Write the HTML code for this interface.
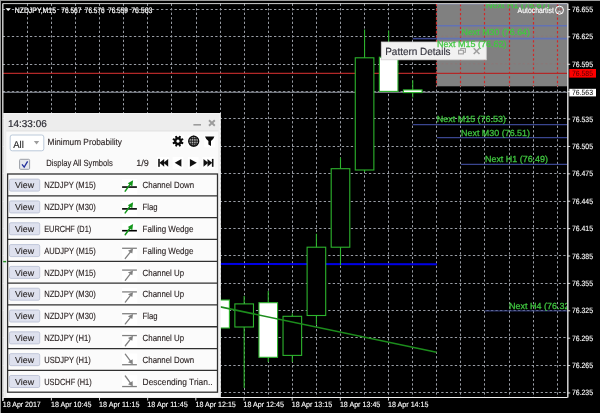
<!DOCTYPE html>
<html><head><meta charset="utf-8"><title>NZDJPY,M15</title>
<style>
html,body{margin:0;padding:0;background:#000;}
body{width:600px;height:413px;overflow:hidden;}
svg{display:block;will-change:transform;}
.st{position:absolute;left:0;top:0;background:#9c9c9c;z-index:2;}
</style></head><body>
<div class="st" style="width:600px;height:1.1px"></div><div class="st" style="width:1px;height:413px"></div>
<svg width="600" height="413" viewBox="0 0 600 413" font-family="'Liberation Sans', sans-serif" text-rendering="geometricPrecision">
<rect x="0" y="0" width="600" height="413" fill="#000"/>
<g stroke="#989ca4" stroke-width="1" stroke-dasharray="2.3 2.22" fill="none">
<line x1="27.50" y1="3.60" x2="27.50" y2="397.50"/>
<line x1="51.50" y1="3.60" x2="51.50" y2="397.50"/>
<line x1="75.50" y1="3.60" x2="75.50" y2="397.50"/>
<line x1="99.50" y1="3.60" x2="99.50" y2="397.50"/>
<line x1="123.50" y1="3.60" x2="123.50" y2="397.50"/>
<line x1="147.50" y1="3.60" x2="147.50" y2="397.50"/>
<line x1="171.50" y1="3.60" x2="171.50" y2="397.50"/>
<line x1="196.50" y1="3.60" x2="196.50" y2="397.50"/>
<line x1="220.50" y1="3.60" x2="220.50" y2="397.50"/>
<line x1="244.50" y1="3.60" x2="244.50" y2="397.50"/>
<line x1="268.50" y1="3.60" x2="268.50" y2="397.50"/>
<line x1="292.50" y1="3.60" x2="292.50" y2="397.50"/>
<line x1="316.50" y1="3.60" x2="316.50" y2="397.50"/>
<line x1="340.50" y1="3.60" x2="340.50" y2="397.50"/>
<line x1="364.50" y1="3.60" x2="364.50" y2="397.50"/>
<line x1="388.50" y1="3.60" x2="388.50" y2="397.50"/>
<line x1="412.50" y1="3.60" x2="412.50" y2="397.50"/>
<line x1="436.50" y1="3.60" x2="436.50" y2="397.50"/>
<line x1="460.50" y1="3.60" x2="460.50" y2="397.50"/>
<line x1="484.50" y1="3.60" x2="484.50" y2="397.50"/>
<line x1="509.50" y1="3.60" x2="509.50" y2="397.50"/>
<line x1="533.50" y1="3.60" x2="533.50" y2="397.50"/>
<line x1="557.50" y1="3.60" x2="557.50" y2="397.50"/>
<line x1="2.80" y1="9.50" x2="567.60" y2="9.50"/>
<line x1="2.80" y1="36.50" x2="567.60" y2="36.50"/>
<line x1="2.80" y1="64.50" x2="567.60" y2="64.50"/>
<line x1="2.80" y1="91.50" x2="567.60" y2="91.50"/>
<line x1="2.80" y1="118.50" x2="567.60" y2="118.50"/>
<line x1="2.80" y1="146.50" x2="567.60" y2="146.50"/>
<line x1="2.80" y1="173.50" x2="567.60" y2="173.50"/>
<line x1="2.80" y1="201.50" x2="567.60" y2="201.50"/>
<line x1="2.80" y1="228.50" x2="567.60" y2="228.50"/>
<line x1="2.80" y1="255.50" x2="567.60" y2="255.50"/>
<line x1="2.80" y1="283.50" x2="567.60" y2="283.50"/>
<line x1="2.80" y1="310.50" x2="567.60" y2="310.50"/>
<line x1="2.80" y1="337.50" x2="567.60" y2="337.50"/>
<line x1="2.80" y1="365.50" x2="567.60" y2="365.50"/>
<line x1="2.80" y1="392.50" x2="567.60" y2="392.50"/>
</g>
<rect x="436.8" y="4" width="130.80" height="82.3" fill="#808080"/>
<g stroke="#d02828" stroke-width="1.2" stroke-dasharray="2.3 2.22">
<line x1="436.50" y1="4" x2="436.50" y2="86.3"/>
<line x1="460.50" y1="4" x2="460.50" y2="86.3"/>
<line x1="484.50" y1="4" x2="484.50" y2="86.3"/>
<line x1="509.50" y1="4" x2="509.50" y2="86.3"/>
<line x1="533.50" y1="4" x2="533.50" y2="86.3"/>
<line x1="557.50" y1="4" x2="557.50" y2="86.3"/>
</g>
<g stroke="#927474" stroke-width="0.7" stroke-dasharray="2.3 2.22">
<line x1="436.8" y1="36.40" x2="567.60" y2="36.40"/>
<line x1="436.8" y1="63.80" x2="567.60" y2="63.80"/>
</g>
<line x1="2.80" y1="73.3" x2="567.60" y2="73.3" stroke="#b22828" stroke-width="1.35"/>
<line x1="2.80" y1="92.4" x2="567.60" y2="92.4" stroke="#70747c" stroke-width="1.3"/>
<line x1="437" y1="4.4" x2="567.60" y2="4.4" stroke="#7880a4" stroke-width="0.6"/>
<line x1="437.00" y1="25.80" x2="567.60" y2="25.80" stroke="#6272b4" stroke-width="1.60"/>
<line x1="412.80" y1="38.60" x2="436.80" y2="38.60" stroke="#3a4690" stroke-width="1.60"/>
<line x1="436.80" y1="38.60" x2="567.60" y2="38.60" stroke="#6272b4" stroke-width="1.60"/>
<line x1="412.80" y1="124.60" x2="567.60" y2="124.60" stroke="#3a4690" stroke-width="1.30"/>
<line x1="436.80" y1="137.70" x2="567.60" y2="137.70" stroke="#3a4690" stroke-width="1.30"/>
<line x1="461.00" y1="164.30" x2="567.60" y2="164.30" stroke="#3a4690" stroke-width="1.30"/>
<line x1="484.80" y1="310.90" x2="567.60" y2="310.90" stroke="#3a4690" stroke-width="1.00"/>
<line x1="2.80" y1="263.6" x2="436.8" y2="264.3" stroke="#0000e6" stroke-width="2"/>
<line x1="220.09" y1="296.00" x2="220.09" y2="340.00" stroke="#2db42d" stroke-width="1.1"/>
<rect x="210.79" y="300.00" width="18.60" height="28.00" fill="#fff" stroke="#2db42d" stroke-width="1.1"/>
<line x1="244.17" y1="296.00" x2="244.17" y2="388.00" stroke="#2db42d" stroke-width="1.1"/>
<rect x="234.87" y="303.90" width="18.60" height="23.10" fill="#000" stroke="#2db42d" stroke-width="1.1"/>
<line x1="268.25" y1="291.00" x2="268.25" y2="362.00" stroke="#2db42d" stroke-width="1.1"/>
<rect x="258.95" y="302.70" width="18.60" height="54.60" fill="#fff" stroke="#2db42d" stroke-width="1.1"/>
<line x1="292.33" y1="313.50" x2="292.33" y2="362.00" stroke="#2db42d" stroke-width="1.1"/>
<rect x="283.03" y="316.30" width="18.60" height="39.10" fill="#000" stroke="#2db42d" stroke-width="1.1"/>
<line x1="316.41" y1="233.70" x2="316.41" y2="324.40" stroke="#2db42d" stroke-width="1.1"/>
<rect x="307.11" y="247.20" width="18.60" height="68.30" fill="#000" stroke="#2db42d" stroke-width="1.1"/>
<line x1="340.49" y1="157.60" x2="340.49" y2="265.00" stroke="#2db42d" stroke-width="1.1"/>
<rect x="331.19" y="168.70" width="18.60" height="78.50" fill="#000" stroke="#2db42d" stroke-width="1.1"/>
<line x1="364.57" y1="29.60" x2="364.57" y2="172.00" stroke="#2db42d" stroke-width="1.1"/>
<rect x="355.27" y="57.80" width="18.60" height="112.20" fill="#000" stroke="#2db42d" stroke-width="1.1"/>
<line x1="388.65" y1="30.50" x2="388.65" y2="91.40" stroke="#2db42d" stroke-width="1.1"/>
<rect x="379.35" y="57.20" width="18.60" height="34.20" fill="#fff" stroke="#2db42d" stroke-width="1.1"/>
<line x1="412.73" y1="80.30" x2="412.73" y2="97.40" stroke="#2db42d" stroke-width="1.1"/>
<rect x="403.43" y="89.90" width="18.60" height="2.70" fill="#fff" stroke="#2db42d" stroke-width="1.1"/>
<line x1="180" y1="298.4" x2="436.5" y2="352.3" stroke="#1c8c1c" stroke-width="1.6"/>
<clipPath id="cc"><rect x="2.80" y="3.60" width="564.30" height="393.90"/></clipPath>
<g clip-path="url(#cc)">
<text x="486.00" y="8.30" font-size="8.8" fill="#40c840" stroke="#40c840" stroke-width="0.25" textLength="63.50" lengthAdjust="spacingAndGlyphs">Next H1 (76.67)</text>
<text x="461.50" y="34.60" font-size="8.8" fill="#40c840" stroke="#40c840" stroke-width="0.25" textLength="68.50" lengthAdjust="spacingAndGlyphs">Next M30 (76.64)</text>
<text x="436.80" y="122.40" font-size="8.8" fill="#40c840" stroke="#40c840" stroke-width="0.25" textLength="69.20" lengthAdjust="spacingAndGlyphs">Next M15 (76.53)</text>
<text x="461.00" y="135.70" font-size="8.8" fill="#40c840" stroke="#40c840" stroke-width="0.25" textLength="69.00" lengthAdjust="spacingAndGlyphs">Next M30 (76.51)</text>
<text x="485.00" y="162.10" font-size="8.8" fill="#40c840" stroke="#40c840" stroke-width="0.25" textLength="63.00" lengthAdjust="spacingAndGlyphs">Next H1 (76.49)</text>
<text x="509.00" y="309.10" font-size="8.8" fill="#40c840" stroke="#40c840" stroke-width="0.25" textLength="63.50" lengthAdjust="spacingAndGlyphs">Next H4 (76.32)</text>
</g>
<line x1="2.80" y1="3.60" x2="567.60" y2="3.60" stroke="#e8e8e8" stroke-width="0.9"/>
<line x1="2.80" y1="3.60" x2="2.80" y2="401.00" stroke="#e4e4e4" stroke-width="1.3"/>
<line x1="567.80" y1="3.60" x2="567.80" y2="397.50" stroke="#d4d4d4" stroke-width="1.5"/>
<line x1="2.80" y1="397.50" x2="567.60" y2="397.50" stroke="#f0f0f0" stroke-width="1"/>
<line x1="567.60" y1="9.50" x2="570.20" y2="9.50" stroke="#f0f0f0" stroke-width="0.9"/>
<text x="572" y="12.00" font-size="7.7" fill="#fff" stroke="#fff" stroke-width="0.12" textLength="21" lengthAdjust="spacingAndGlyphs">76.655</text>
<line x1="567.60" y1="36.89" x2="570.20" y2="36.89" stroke="#f0f0f0" stroke-width="0.9"/>
<text x="572" y="39.39" font-size="7.7" fill="#fff" stroke="#fff" stroke-width="0.12" textLength="21" lengthAdjust="spacingAndGlyphs">76.625</text>
<line x1="567.60" y1="64.28" x2="570.20" y2="64.28" stroke="#f0f0f0" stroke-width="0.9"/>
<text x="572" y="66.78" font-size="7.7" fill="#fff" stroke="#fff" stroke-width="0.12" textLength="21" lengthAdjust="spacingAndGlyphs">76.595</text>
<line x1="567.60" y1="91.67" x2="570.20" y2="91.67" stroke="#f0f0f0" stroke-width="0.9"/>
<line x1="567.60" y1="119.06" x2="570.20" y2="119.06" stroke="#f0f0f0" stroke-width="0.9"/>
<text x="572" y="121.56" font-size="7.7" fill="#fff" stroke="#fff" stroke-width="0.12" textLength="21" lengthAdjust="spacingAndGlyphs">76.535</text>
<line x1="567.60" y1="146.45" x2="570.20" y2="146.45" stroke="#f0f0f0" stroke-width="0.9"/>
<text x="572" y="148.95" font-size="7.7" fill="#fff" stroke="#fff" stroke-width="0.12" textLength="21" lengthAdjust="spacingAndGlyphs">76.505</text>
<line x1="567.60" y1="173.84" x2="570.20" y2="173.84" stroke="#f0f0f0" stroke-width="0.9"/>
<text x="572" y="176.34" font-size="7.7" fill="#fff" stroke="#fff" stroke-width="0.12" textLength="21" lengthAdjust="spacingAndGlyphs">76.475</text>
<line x1="567.60" y1="201.23" x2="570.20" y2="201.23" stroke="#f0f0f0" stroke-width="0.9"/>
<text x="572" y="203.73" font-size="7.7" fill="#fff" stroke="#fff" stroke-width="0.12" textLength="21" lengthAdjust="spacingAndGlyphs">76.445</text>
<line x1="567.60" y1="228.62" x2="570.20" y2="228.62" stroke="#f0f0f0" stroke-width="0.9"/>
<text x="572" y="231.12" font-size="7.7" fill="#fff" stroke="#fff" stroke-width="0.12" textLength="21" lengthAdjust="spacingAndGlyphs">76.415</text>
<line x1="567.60" y1="256.01" x2="570.20" y2="256.01" stroke="#f0f0f0" stroke-width="0.9"/>
<text x="572" y="258.51" font-size="7.7" fill="#fff" stroke="#fff" stroke-width="0.12" textLength="21" lengthAdjust="spacingAndGlyphs">76.385</text>
<line x1="567.60" y1="283.40" x2="570.20" y2="283.40" stroke="#f0f0f0" stroke-width="0.9"/>
<text x="572" y="285.90" font-size="7.7" fill="#fff" stroke="#fff" stroke-width="0.12" textLength="21" lengthAdjust="spacingAndGlyphs">76.355</text>
<line x1="567.60" y1="310.79" x2="570.20" y2="310.79" stroke="#f0f0f0" stroke-width="0.9"/>
<text x="572" y="313.29" font-size="7.7" fill="#fff" stroke="#fff" stroke-width="0.12" textLength="21" lengthAdjust="spacingAndGlyphs">76.325</text>
<line x1="567.60" y1="338.18" x2="570.20" y2="338.18" stroke="#f0f0f0" stroke-width="0.9"/>
<text x="572" y="340.68" font-size="7.7" fill="#fff" stroke="#fff" stroke-width="0.12" textLength="21" lengthAdjust="spacingAndGlyphs">76.295</text>
<line x1="567.60" y1="365.57" x2="570.20" y2="365.57" stroke="#f0f0f0" stroke-width="0.9"/>
<text x="572" y="368.07" font-size="7.7" fill="#fff" stroke="#fff" stroke-width="0.12" textLength="21" lengthAdjust="spacingAndGlyphs">76.265</text>
<line x1="567.60" y1="392.96" x2="570.20" y2="392.96" stroke="#f0f0f0" stroke-width="0.9"/>
<text x="572" y="395.46" font-size="7.7" fill="#fff" stroke="#fff" stroke-width="0.12" textLength="21" lengthAdjust="spacingAndGlyphs">76.235</text>
<rect x="569.3" y="69" width="26.7" height="8.6" fill="#ff0000"/>
<text x="572" y="76.2" font-size="7.6" fill="#500000" textLength="21" lengthAdjust="spacingAndGlyphs">76.585</text>
<rect x="569.3" y="88.8" width="26.7" height="7.6" fill="#ffffff"/>
<text x="572" y="95.4" font-size="7.6" fill="#000" textLength="21" lengthAdjust="spacingAndGlyphs">76.563</text>
<line x1="3.20" y1="397.50" x2="3.20" y2="400.50" stroke="#f0f0f0" stroke-width="0.9"/>
<text x="2.80" y="407.2" font-size="7.7" fill="#fff" stroke="#fff" stroke-width="0.12" textLength="38.0" lengthAdjust="spacingAndGlyphs">18 Apr 2017</text>
<line x1="51.36" y1="397.50" x2="51.36" y2="400.50" stroke="#f0f0f0" stroke-width="0.9"/>
<text x="50.96" y="407.2" font-size="7.7" fill="#fff" stroke="#fff" stroke-width="0.12" textLength="40.4" lengthAdjust="spacingAndGlyphs">18 Apr 10:45</text>
<line x1="99.52" y1="397.50" x2="99.52" y2="400.50" stroke="#f0f0f0" stroke-width="0.9"/>
<text x="99.12" y="407.2" font-size="7.7" fill="#fff" stroke="#fff" stroke-width="0.12" textLength="40.4" lengthAdjust="spacingAndGlyphs">18 Apr 11:15</text>
<line x1="147.68" y1="397.50" x2="147.68" y2="400.50" stroke="#f0f0f0" stroke-width="0.9"/>
<text x="147.28" y="407.2" font-size="7.7" fill="#fff" stroke="#fff" stroke-width="0.12" textLength="40.4" lengthAdjust="spacingAndGlyphs">18 Apr 11:45</text>
<line x1="195.84" y1="397.50" x2="195.84" y2="400.50" stroke="#f0f0f0" stroke-width="0.9"/>
<text x="195.44" y="407.2" font-size="7.7" fill="#fff" stroke="#fff" stroke-width="0.12" textLength="40.4" lengthAdjust="spacingAndGlyphs">18 Apr 12:15</text>
<line x1="244.00" y1="397.50" x2="244.00" y2="400.50" stroke="#f0f0f0" stroke-width="0.9"/>
<text x="243.60" y="407.2" font-size="7.7" fill="#fff" stroke="#fff" stroke-width="0.12" textLength="40.4" lengthAdjust="spacingAndGlyphs">18 Apr 12:45</text>
<line x1="292.16" y1="397.50" x2="292.16" y2="400.50" stroke="#f0f0f0" stroke-width="0.9"/>
<text x="291.76" y="407.2" font-size="7.7" fill="#fff" stroke="#fff" stroke-width="0.12" textLength="40.4" lengthAdjust="spacingAndGlyphs">18 Apr 13:15</text>
<line x1="340.32" y1="397.50" x2="340.32" y2="400.50" stroke="#f0f0f0" stroke-width="0.9"/>
<text x="339.92" y="407.2" font-size="7.7" fill="#fff" stroke="#fff" stroke-width="0.12" textLength="40.4" lengthAdjust="spacingAndGlyphs">18 Apr 13:45</text>
<line x1="388.48" y1="397.50" x2="388.48" y2="400.50" stroke="#f0f0f0" stroke-width="0.9"/>
<text x="388.08" y="407.2" font-size="7.7" fill="#fff" stroke="#fff" stroke-width="0.12" textLength="40.4" lengthAdjust="spacingAndGlyphs">18 Apr 14:15</text>
<path d="M5.5 8.3 L10.9 8.3 L8.2 11.1 Z" fill="#fff"/>
<text x="14.70" y="12.6" font-size="8" fill="#fff" stroke="#fff" stroke-width="0.2" textLength="41.30" lengthAdjust="spacingAndGlyphs">NZDJPY,M15</text>
<text x="61.30" y="12.6" font-size="8" fill="#fff" stroke="#fff" stroke-width="0.2" textLength="20.00" lengthAdjust="spacingAndGlyphs">76.567</text>
<text x="84.80" y="12.6" font-size="8" fill="#fff" stroke="#fff" stroke-width="0.2" textLength="19.80" lengthAdjust="spacingAndGlyphs">76.576</text>
<text x="108.00" y="12.6" font-size="8" fill="#fff" stroke="#fff" stroke-width="0.2" textLength="20.00" lengthAdjust="spacingAndGlyphs">76.559</text>
<text x="131.20" y="12.6" font-size="8" fill="#fff" stroke="#fff" stroke-width="0.2" textLength="21.30" lengthAdjust="spacingAndGlyphs">76.563</text>
<text x="517.6" y="13.1" font-size="8" fill="#fff" stroke="#fff" stroke-width="0.15" textLength="36.3" lengthAdjust="spacingAndGlyphs">Autochartist</text>
<circle cx="559.5" cy="10.2" r="4.0" fill="#8a8484" stroke="#fff" stroke-width="1"/>
<path d="M557.6 12.5 Q559.5 10.6 561.4 12.5" stroke="#fff" stroke-width="0.8" fill="none"/>
<circle cx="558.1" cy="9.1" r="0.7" fill="#a02020"/><circle cx="560.9" cy="9.1" r="0.7" fill="#a02020"/>
<rect x="381.3" y="42" width="105" height="17.8" fill="#f1f1f1" stroke="#d0d0d0" stroke-width="0.8"/>
<text x="385.2" y="54.6" font-size="10.4" fill="#34343e" stroke="#34343e" stroke-width="0.15" textLength="65.4" lengthAdjust="spacingAndGlyphs">Pattern Details</text>
<g stroke="#a0a0a0" stroke-width="1.1" fill="none"><rect x="458.6" y="50.3" width="4.8" height="3.6"/><path d="M460.8 50.2 V48.5 H465.4 V52.2 H463.5"/></g>
<path d="M473.7 48.3 L479.5 54 M479.5 48.3 L473.7 54" stroke="#a0a0a0" stroke-width="1.6"/>
<g clip-path="url(#cc)">
<text x="437.00" y="47.40" font-size="8.8" fill="#40c840" stroke="#40c840" stroke-width="0.25" textLength="69.50" lengthAdjust="spacingAndGlyphs">Next M15 (76.62)</text>
</g>
<rect x="3.40" y="113.00" width="217.20" height="284.00" fill="#ededed"/>
<path d="M4.00 397.00 V113.60 H220.00 V397.00" fill="none" stroke="#f4f4f4" stroke-width="1.2"/>
<rect x="6.3" y="131" width="212" height="266" fill="#fafafa"/>
<line x1="6.3" y1="131" x2="218.3" y2="131" stroke="#dcdcdc" stroke-width="0.8"/>
<text x="7.9" y="126.7" font-size="10" fill="#2c2c34" stroke="#2c2c34" stroke-width="0.2" textLength="38.9" lengthAdjust="spacingAndGlyphs">14:33:06</text>
<line x1="193.4" y1="124.8" x2="201" y2="124.8" stroke="#9c9c9c" stroke-width="1.6"/>
<path d="M209 120.2 L214.8 125.8 M214.8 120.2 L209 125.8" stroke="#9c9c9c" stroke-width="1.9"/>
<rect x="10.2" y="135" width="33.6" height="15.8" rx="2" fill="#fff" stroke="#b4c4d6" stroke-width="0.9"/>
<text x="13.2" y="147.7" font-size="9.8" fill="#2c2c2c" stroke="#2c2c2c" stroke-width="0.15" textLength="10.6" lengthAdjust="spacingAndGlyphs">All</text>
<path d="M33.9 141.1 L39.2 141.1 L36.55 144.4 Z" fill="#9c9c9c"/>
<text x="47.5" y="145" font-size="9" fill="#2c2424" stroke="#2c2424" stroke-width="0.12" textLength="74.5" lengthAdjust="spacingAndGlyphs">Minimum Probability</text>
<rect x="19.6" y="159.3" width="10" height="10" rx="1" fill="#e6e8ee" stroke="#9a9ea6" stroke-width="1"/>
<path d="M22 164.3 L24.2 167.2 L27.6 161.4" stroke="#22309c" stroke-width="1.3" fill="none"/>
<text x="46.2" y="165.9" font-size="9" fill="#2c2424" stroke="#2c2424" stroke-width="0.12" textLength="66.6" lengthAdjust="spacingAndGlyphs">Display All Symbols</text>
<text x="136.2" y="165.9" font-size="9" fill="#2c2424" stroke="#2c2424" stroke-width="0.12" textLength="12.6" lengthAdjust="spacingAndGlyphs">1/9</text>
<rect x="172.00" y="135.4" width="12.00" height="12" fill="#ffffff"/>
<rect x="187.50" y="135.4" width="12.00" height="12" fill="#ffffff"/>
<rect x="204.30" y="135.4" width="11.00" height="12" fill="#ffffff"/>
<path d="M183.53 142.57 L182.88 144.14 L181.00 143.69 L180.49 144.20 L180.94 146.08 L179.37 146.73 L178.36 145.08 L177.64 145.08 L176.63 146.73 L175.06 146.08 L175.51 144.20 L175.00 143.69 L173.12 144.14 L172.47 142.57 L174.12 141.56 L174.12 140.84 L172.47 139.83 L173.12 138.26 L175.00 138.71 L175.51 138.20 L175.06 136.32 L176.63 135.67 L177.64 137.32 L178.36 137.32 L179.37 135.67 L180.94 136.32 L180.49 138.20 L181.00 138.71 L182.88 138.26 L183.53 139.83 L181.88 140.84 L181.88 141.56 Z M178.00 139.60 a1.6 1.6 0 1 0 0.01 0 Z" fill="#0a0a0a" fill-rule="evenodd"/>
<g stroke="#0a0a0a" fill="none"><circle cx="193.70" cy="141.20" r="5.0" stroke-width="1.3" fill="#b4b4b4"/>
<ellipse cx="193.70" cy="141.20" rx="2.5" ry="5.0" stroke-width="0.8"/>
<path d="M188.70 141.20 H198.70 M189.30 138.60 H198.10 M189.30 143.80 H198.10 M193.70 136.20 V146.20" stroke-width="0.8"/></g>
<path d="M205.00 136.60 H214.40 Q213.90 138.70 211.00 141.10 V145.90 L208.40 144.50 V141.10 Q205.50 138.70 205.00 136.60 Z" fill="#0a0a0a"/>
<rect x="157.00" y="157" width="12.20" height="11.8" fill="#ffffff"/>
<rect x="172.60" y="157" width="10.60" height="11.8" fill="#ffffff"/>
<rect x="188.00" y="157" width="10.60" height="11.8" fill="#ffffff"/>
<rect x="202.40" y="157" width="12.20" height="11.8" fill="#ffffff"/>
<rect x="158.2" y="158.90" width="1.6" height="7.90" fill="#111"/>
<path d="M164.20 158.90 L159.40 162.85 L164.20 166.80 Z" fill="#111"/>
<path d="M168.20 158.90 L163.40 162.85 L168.20 166.80 Z" fill="#111"/>
<path d="M181.40 158.90 L174.70 162.85 L181.40 166.80 Z" fill="#111"/>
<path d="M189.90 158.90 L196.80 162.85 L189.90 166.80 Z" fill="#111"/>
<path d="M203.50 158.90 L208.30 162.85 L203.50 166.80 Z" fill="#111"/>
<path d="M207.50 158.90 L212.30 162.85 L207.50 166.80 Z" fill="#111"/>
<rect x="211.9" y="158.90" width="1.6" height="7.90" fill="#111"/>
<rect x="7.60" y="174.00" width="209.90" height="218.20" fill="#fbfbfb" stroke="#303030" stroke-width="1.3"/>
<rect x="9.4" y="179.11" width="30.3" height="12" rx="1.5" fill="#dee1ee" stroke="#bcc3d6" stroke-width="0.9"/>
<text x="15.1" y="188.31" font-size="8.7" fill="#2c2828" stroke="#2c2828" stroke-width="0.12" textLength="19" lengthAdjust="spacingAndGlyphs">View</text>
<text x="44.2" y="188.31" font-size="9" fill="#2c2424" stroke="#2c2424" stroke-width="0.12" textLength="51.5" lengthAdjust="spacingAndGlyphs">NZDJPY (M15)</text>
<text x="142.6" y="188.31" font-size="9" fill="#2c2424" stroke="#2c2424" stroke-width="0.12" textLength="51.5" lengthAdjust="spacingAndGlyphs">Channel Down</text>
<rect x="121.9" y="179.01" width="15.4" height="15.2" fill="#ffffff"/>
<line x1="122.1" y1="187.06" x2="136.9" y2="187.06" stroke="#000" stroke-width="1.6"/>
<line x1="125.2" y1="191.11" x2="130.4" y2="183.91" stroke="#12961a" stroke-width="1.5" stroke-linecap="round"/>
<path d="M133.1 180.31 L127.8 183.31 L132.3 186.51 Z" fill="#12961a"/>
<line x1="7.60" y1="195.82" x2="217.50" y2="195.82" stroke="#303030" stroke-width="1.3"/>
<rect x="9.4" y="200.93" width="30.3" height="12" rx="1.5" fill="#dee1ee" stroke="#bcc3d6" stroke-width="0.9"/>
<text x="15.1" y="210.13" font-size="8.7" fill="#2c2828" stroke="#2c2828" stroke-width="0.12" textLength="19" lengthAdjust="spacingAndGlyphs">View</text>
<text x="44.2" y="210.13" font-size="9" fill="#2c2424" stroke="#2c2424" stroke-width="0.12" textLength="51.5" lengthAdjust="spacingAndGlyphs">NZDJPY (M30)</text>
<text x="142.6" y="210.13" font-size="9" fill="#2c2424" stroke="#2c2424" stroke-width="0.12" textLength="15.0" lengthAdjust="spacingAndGlyphs">Flag</text>
<rect x="121.9" y="200.83" width="15.4" height="15.2" fill="#ffffff"/>
<line x1="122.1" y1="208.88" x2="136.9" y2="208.88" stroke="#000" stroke-width="1.6"/>
<line x1="125.2" y1="212.93" x2="130.4" y2="205.73" stroke="#12961a" stroke-width="1.5" stroke-linecap="round"/>
<path d="M133.1 202.13 L127.8 205.13 L132.3 208.33 Z" fill="#12961a"/>
<line x1="7.60" y1="217.64" x2="217.50" y2="217.64" stroke="#303030" stroke-width="1.3"/>
<rect x="9.4" y="222.75" width="30.3" height="12" rx="1.5" fill="#dee1ee" stroke="#bcc3d6" stroke-width="0.9"/>
<text x="15.1" y="231.95" font-size="8.7" fill="#2c2828" stroke="#2c2828" stroke-width="0.12" textLength="19" lengthAdjust="spacingAndGlyphs">View</text>
<text x="44.2" y="231.95" font-size="9" fill="#2c2424" stroke="#2c2424" stroke-width="0.12" textLength="47.0" lengthAdjust="spacingAndGlyphs">EURCHF (D1)</text>
<text x="142.6" y="231.95" font-size="9" fill="#2c2424" stroke="#2c2424" stroke-width="0.12" textLength="50.8" lengthAdjust="spacingAndGlyphs">Falling Wedge</text>
<rect x="121.9" y="222.65" width="15.4" height="15.2" fill="#ffffff"/>
<line x1="122.1" y1="230.70" x2="136.9" y2="230.70" stroke="#000" stroke-width="1.6"/>
<line x1="125.2" y1="234.75" x2="130.4" y2="227.55" stroke="#12961a" stroke-width="1.5" stroke-linecap="round"/>
<path d="M133.1 223.95 L127.8 226.95 L132.3 230.15 Z" fill="#12961a"/>
<line x1="7.60" y1="239.46" x2="217.50" y2="239.46" stroke="#303030" stroke-width="1.3"/>
<rect x="9.4" y="244.57" width="30.3" height="12" rx="1.5" fill="#dee1ee" stroke="#bcc3d6" stroke-width="0.9"/>
<text x="15.1" y="253.77" font-size="8.7" fill="#2c2828" stroke="#2c2828" stroke-width="0.12" textLength="19" lengthAdjust="spacingAndGlyphs">View</text>
<text x="44.2" y="253.77" font-size="9" fill="#2c2424" stroke="#2c2424" stroke-width="0.12" textLength="51.5" lengthAdjust="spacingAndGlyphs">AUDJPY (M15)</text>
<text x="142.6" y="253.77" font-size="9" fill="#2c2424" stroke="#2c2424" stroke-width="0.12" textLength="50.8" lengthAdjust="spacingAndGlyphs">Falling Wedge</text>
<rect x="121.9" y="244.47" width="15.4" height="15.2" fill="#ffffff"/>
<line x1="122.1" y1="248.27" x2="136.9" y2="248.27" stroke="#808080" stroke-width="1.3"/>
<line x1="125.3" y1="258.47" x2="130.3" y2="252.07" stroke="#808080" stroke-width="1.3" stroke-linecap="round"/>
<path d="M133.0 248.57 L127.9 250.67 L132.3 253.47 Z" fill="#808080"/>
<line x1="7.60" y1="261.28" x2="217.50" y2="261.28" stroke="#303030" stroke-width="1.3"/>
<rect x="9.4" y="266.39" width="30.3" height="12" rx="1.5" fill="#dee1ee" stroke="#bcc3d6" stroke-width="0.9"/>
<text x="15.1" y="275.59" font-size="8.7" fill="#2c2828" stroke="#2c2828" stroke-width="0.12" textLength="19" lengthAdjust="spacingAndGlyphs">View</text>
<text x="44.2" y="275.59" font-size="9" fill="#2c2424" stroke="#2c2424" stroke-width="0.12" textLength="51.5" lengthAdjust="spacingAndGlyphs">NZDJPY (M15)</text>
<text x="142.6" y="275.59" font-size="9" fill="#2c2424" stroke="#2c2424" stroke-width="0.12" textLength="41.5" lengthAdjust="spacingAndGlyphs">Channel Up</text>
<rect x="121.9" y="266.29" width="15.4" height="15.2" fill="#ffffff"/>
<line x1="122.1" y1="270.09" x2="136.9" y2="270.09" stroke="#808080" stroke-width="1.3"/>
<line x1="125.3" y1="280.29" x2="130.3" y2="273.89" stroke="#808080" stroke-width="1.3" stroke-linecap="round"/>
<path d="M133.0 270.39 L127.9 272.49 L132.3 275.29 Z" fill="#808080"/>
<line x1="7.60" y1="283.10" x2="217.50" y2="283.10" stroke="#303030" stroke-width="1.3"/>
<rect x="9.4" y="288.21" width="30.3" height="12" rx="1.5" fill="#dee1ee" stroke="#bcc3d6" stroke-width="0.9"/>
<text x="15.1" y="297.41" font-size="8.7" fill="#2c2828" stroke="#2c2828" stroke-width="0.12" textLength="19" lengthAdjust="spacingAndGlyphs">View</text>
<text x="44.2" y="297.41" font-size="9" fill="#2c2424" stroke="#2c2424" stroke-width="0.12" textLength="51.5" lengthAdjust="spacingAndGlyphs">NZDJPY (M30)</text>
<text x="142.6" y="297.41" font-size="9" fill="#2c2424" stroke="#2c2424" stroke-width="0.12" textLength="41.5" lengthAdjust="spacingAndGlyphs">Channel Up</text>
<rect x="121.9" y="288.11" width="15.4" height="15.2" fill="#ffffff"/>
<line x1="122.1" y1="291.91" x2="136.9" y2="291.91" stroke="#808080" stroke-width="1.3"/>
<line x1="125.3" y1="302.11" x2="130.3" y2="295.71" stroke="#808080" stroke-width="1.3" stroke-linecap="round"/>
<path d="M133.0 292.21 L127.9 294.31 L132.3 297.11 Z" fill="#808080"/>
<line x1="7.60" y1="304.92" x2="217.50" y2="304.92" stroke="#303030" stroke-width="1.3"/>
<rect x="9.4" y="310.03" width="30.3" height="12" rx="1.5" fill="#dee1ee" stroke="#bcc3d6" stroke-width="0.9"/>
<text x="15.1" y="319.23" font-size="8.7" fill="#2c2828" stroke="#2c2828" stroke-width="0.12" textLength="19" lengthAdjust="spacingAndGlyphs">View</text>
<text x="44.2" y="319.23" font-size="9" fill="#2c2424" stroke="#2c2424" stroke-width="0.12" textLength="51.5" lengthAdjust="spacingAndGlyphs">NZDJPY (M30)</text>
<text x="142.6" y="319.23" font-size="9" fill="#2c2424" stroke="#2c2424" stroke-width="0.12" textLength="15.0" lengthAdjust="spacingAndGlyphs">Flag</text>
<rect x="121.9" y="309.93" width="15.4" height="15.2" fill="#ffffff"/>
<line x1="122.1" y1="313.73" x2="136.9" y2="313.73" stroke="#808080" stroke-width="1.3"/>
<line x1="125.3" y1="323.93" x2="130.3" y2="317.53" stroke="#808080" stroke-width="1.3" stroke-linecap="round"/>
<path d="M133.0 314.03 L127.9 316.13 L132.3 318.93 Z" fill="#808080"/>
<line x1="7.60" y1="326.74" x2="217.50" y2="326.74" stroke="#303030" stroke-width="1.3"/>
<rect x="9.4" y="331.85" width="30.3" height="12" rx="1.5" fill="#dee1ee" stroke="#bcc3d6" stroke-width="0.9"/>
<text x="15.1" y="341.05" font-size="8.7" fill="#2c2828" stroke="#2c2828" stroke-width="0.12" textLength="19" lengthAdjust="spacingAndGlyphs">View</text>
<text x="44.2" y="341.05" font-size="9" fill="#2c2424" stroke="#2c2424" stroke-width="0.12" textLength="46.5" lengthAdjust="spacingAndGlyphs">NZDJPY (H1)</text>
<text x="142.6" y="341.05" font-size="9" fill="#2c2424" stroke="#2c2424" stroke-width="0.12" textLength="41.5" lengthAdjust="spacingAndGlyphs">Channel Up</text>
<rect x="121.9" y="331.75" width="15.4" height="15.2" fill="#ffffff"/>
<line x1="122.1" y1="335.55" x2="136.9" y2="335.55" stroke="#808080" stroke-width="1.3"/>
<line x1="125.3" y1="345.75" x2="130.3" y2="339.35" stroke="#808080" stroke-width="1.3" stroke-linecap="round"/>
<path d="M133.0 335.85 L127.9 337.95 L132.3 340.75 Z" fill="#808080"/>
<line x1="7.60" y1="348.56" x2="217.50" y2="348.56" stroke="#303030" stroke-width="1.3"/>
<rect x="9.4" y="353.67" width="30.3" height="12" rx="1.5" fill="#dee1ee" stroke="#bcc3d6" stroke-width="0.9"/>
<text x="15.1" y="362.87" font-size="8.7" fill="#2c2828" stroke="#2c2828" stroke-width="0.12" textLength="19" lengthAdjust="spacingAndGlyphs">View</text>
<text x="44.2" y="362.87" font-size="9" fill="#2c2424" stroke="#2c2424" stroke-width="0.12" textLength="46.5" lengthAdjust="spacingAndGlyphs">USDJPY (H1)</text>
<text x="142.6" y="362.87" font-size="9" fill="#2c2424" stroke="#2c2424" stroke-width="0.12" textLength="51.5" lengthAdjust="spacingAndGlyphs">Channel Down</text>
<rect x="121.9" y="353.57" width="15.4" height="15.2" fill="#ffffff"/>
<line x1="122.1" y1="364.72" x2="136.9" y2="364.72" stroke="#808080" stroke-width="1.3"/>
<line x1="125.3" y1="354.17" x2="130.3" y2="360.97" stroke="#808080" stroke-width="1.3" stroke-linecap="round"/>
<path d="M132.8 364.37 L128.0 362.37 L132.6 359.27 Z" fill="#808080"/>
<line x1="7.60" y1="370.38" x2="217.50" y2="370.38" stroke="#303030" stroke-width="1.3"/>
<rect x="9.4" y="375.49" width="30.3" height="12" rx="1.5" fill="#dee1ee" stroke="#bcc3d6" stroke-width="0.9"/>
<text x="15.1" y="384.69" font-size="8.7" fill="#2c2828" stroke="#2c2828" stroke-width="0.12" textLength="19" lengthAdjust="spacingAndGlyphs">View</text>
<text x="44.2" y="384.69" font-size="9" fill="#2c2424" stroke="#2c2424" stroke-width="0.12" textLength="47.5" lengthAdjust="spacingAndGlyphs">USDCHF (H1)</text>
<text x="142.6" y="384.69" font-size="9" fill="#2c2424" stroke="#2c2424" stroke-width="0.12" textLength="70.0" lengthAdjust="spacingAndGlyphs">Descending Trian..</text>
<rect x="121.9" y="375.39" width="15.4" height="15.2" fill="#ffffff"/>
<line x1="122.1" y1="386.54" x2="136.9" y2="386.54" stroke="#808080" stroke-width="1.3"/>
<line x1="125.3" y1="375.99" x2="130.3" y2="382.79" stroke="#808080" stroke-width="1.3" stroke-linecap="round"/>
<path d="M132.8 386.19 L128.0 384.19 L132.6 381.09 Z" fill="#808080"/>
<rect x="3.2" y="260.9" width="3" height="1.4" fill="#1c8c1c"/>
</svg>
</body></html>
